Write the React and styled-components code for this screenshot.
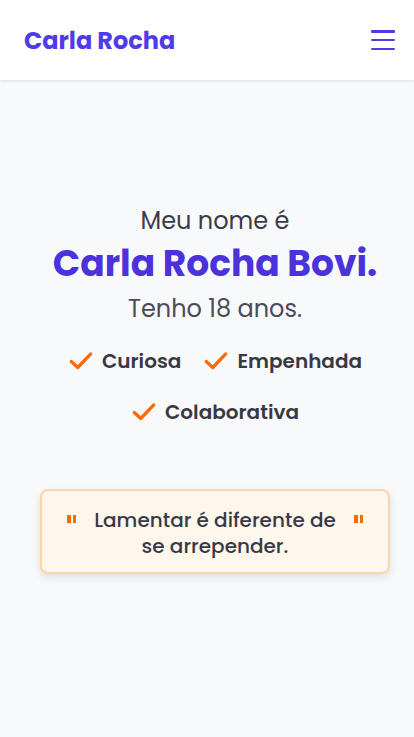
import React from "react";
import styled, { createGlobalStyle } from "styled-components";

const GlobalStyle = createGlobalStyle`
  * { box-sizing: border-box; }
  body {
    margin: 0;
    background: #f8f9fb;
    font-family: "Poppins", "Noto Sans", sans-serif;
  }
`;

function CheckIcon() {
  return (
    <svg width="26" height="26" viewBox="0 0 24 24" fill="none">
      <path d="M3 12.5 9 18 21 5.5" stroke="#ff6a00" strokeWidth="3" strokeLinecap="round" strokeLinejoin="round" />
    </svg>
  );
}

export default function App() {
  const traits = ["Curiosa", "Empenhada", "Colaborativa"];
  return (
    <>
      <GlobalStyle />
      <Header>
        <Logo>Carla Rocha</Logo>
        <Burger aria-label="menu">
          <span />
          <span />
          <span />
        </Burger>
      </Header>
      <Main>
        <Intro>Meu nome é</Intro>
        <Name>Carla Rocha Bovi.</Name>
        <Age>Tenho 18 anos.</Age>
        <Traits>
          {traits.map((t) => (
            <Trait key={t}>
              <CheckIcon />
              {t}
            </Trait>
          ))}
        </Traits>
        <Quote>
          <QuoteMark />
          <QuoteText>Lamentar é diferente de se arrepender.</QuoteText>
          <QuoteMark />
        </Quote>
      </Main>
    </>
  );
}

const Header = styled.header`
  height: 80px;
  background: #fff;
  display: flex;
  align-items: center;
  justify-content: space-between;
  padding: 0 19px 0 24px;
  box-shadow: 0 1px 3px rgba(0, 0, 0, 0.12);
`;

const Logo = styled.h1`
  margin: 0;
  font-size: 24px;
  font-weight: 700;
  color: #4f3ce8;
`;

const Burger = styled.button`
  width: 24px;
  height: 20px;
  padding: 0;
  border: none;
  background: none;
  display: flex;
  flex-direction: column;
  justify-content: space-between;
  span {
    display: block;
    height: 2.5px;
    background: #4f3ce8;
    border-radius: 1px;
  }
`;

const Main = styled.main`
  min-height: 657px;
  display: flex;
  flex-direction: column;
  align-items: center;
  padding: 123px 8px 0 24px;
  color: #3b3b4a;
`;

const Intro = styled.p`
  margin: 0;
  font-size: 24px;
  line-height: 36px;
`;

const Name = styled.h2`
  margin: 0;
  font-size: 36px;
  line-height: 50px;
  font-weight: 700;
  color: #4a32dc;
`;

const Age = styled.p`
  margin: 0;
  font-size: 24px;
  line-height: 40px;
  color: #4b4b5a;
`;

const Traits = styled.ul`
  list-style: none;
  margin: 15px 0 0;
  padding: 0;
  display: flex;
  flex-wrap: wrap;
  justify-content: center;
  column-gap: 22px;
  row-gap: 17px;
  max-width: 310px;
`;

const Trait = styled.li`
  display: flex;
  align-items: center;
  gap: 8px;
  font-size: 20px;
  font-weight: 600;
  color: #393946;
  line-height: 34px;
`;

const Quote = styled.blockquote`
  margin: 60px 0 0;
  width: 350px;
  padding: 16px 25px 13px;
  display: flex;
  align-items: flex-start;
  gap: 16px;
  background: #fff6ec;
  border: 2px solid #fdd5a6;
  border-radius: 8px;
  box-shadow: 0 4px 8px rgba(0, 0, 0, 0.1);
`;

const QuoteMark = styled.span`
  flex: none;
  margin-top: 8px;
  width: 9px;
  height: 8px;
  background: linear-gradient(90deg, #ff6a00 0 3.5px, transparent 3.5px 5.5px, #ff6a00 5.5px 9px);
`;

const QuoteText = styled.p`
  flex: 1;
  margin: 0;
  text-align: center;
  font-size: 20px;
  line-height: 26px;
  font-weight: 500;
  color: #393946;
`;
